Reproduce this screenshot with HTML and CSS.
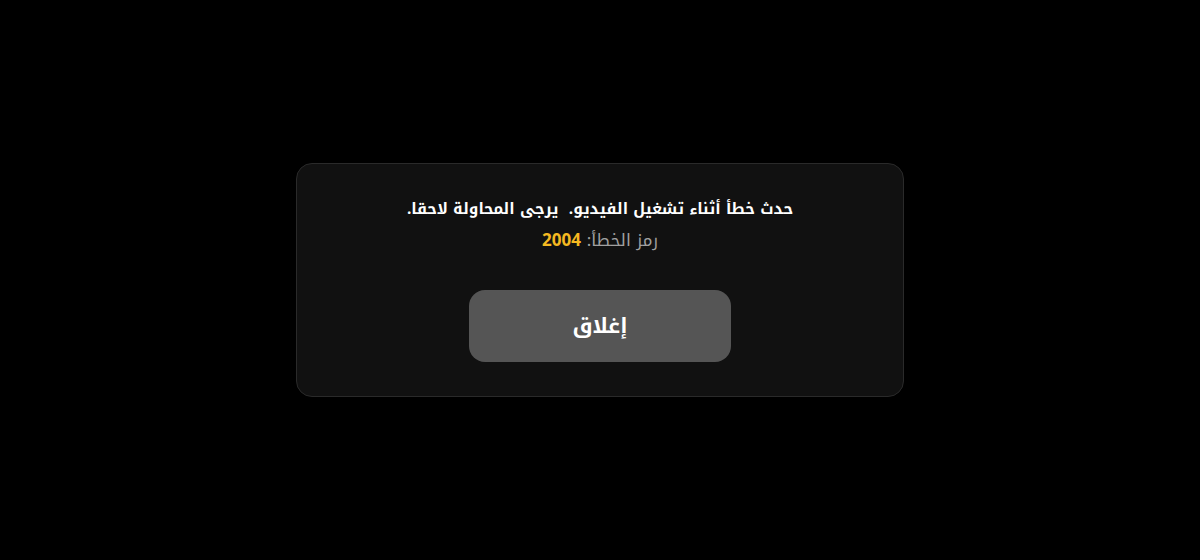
FILE: index.html
```html
<!DOCTYPE html>
<html lang="ar" dir="rtl">
<head>
<meta charset="utf-8">
<link rel="stylesheet" href="styles.css">
</head>
<body>
<div class="stage">
  <div class="card">
    <p class="msg">حدث خطأ أثناء تشغيل الفيديو.&nbsp; يرجى المحاولة لاحقا.</p>
    <p class="code">رمز الخطأ: <span class="num">2004</span></p>
    <button class="close">إغلاق</button>
  </div>
</div>
</body>
</html>
```
FILE: styles.css
```css
html, body {
  margin: 0;
  padding: 0;
  background: #000;
  height: 100%;
}
body {
  font-family: "Noto Kufi Arabic", "Noto Sans Arabic", "DejaVu Sans", sans-serif;
}
.stage {
  height: 560px;
  display: flex;
  align-items: center;
  justify-content: center;
}
.card {
  box-sizing: border-box;
  width: 608px;
  height: 234px;
  background: #111111;
  border: 1px solid #2a2a2a;
  border-radius: 16px;
  display: flex;
  flex-direction: column;
  align-items: center;
  padding-top: 31px;
}
.msg {
  margin: 0;
  color: #fff;
  font-size: 15.4px;
  font-weight: 700;
  line-height: 28px;
}
.code {
  margin: 3px 0 0;
  color: #a0a0a0;
  font-size: 17px;
  line-height: 28px;
}
.num {
  color: #f5b921;
  font-weight: 700;
}
.close {
  margin-top: 36px;
  width: 262px;
  height: 72px;
  border: none;
  border-radius: 16px;
  background: #555555;
  color: #fff;
  font-family: inherit;
  font-size: 21px;
  font-weight: 700;
}
```
